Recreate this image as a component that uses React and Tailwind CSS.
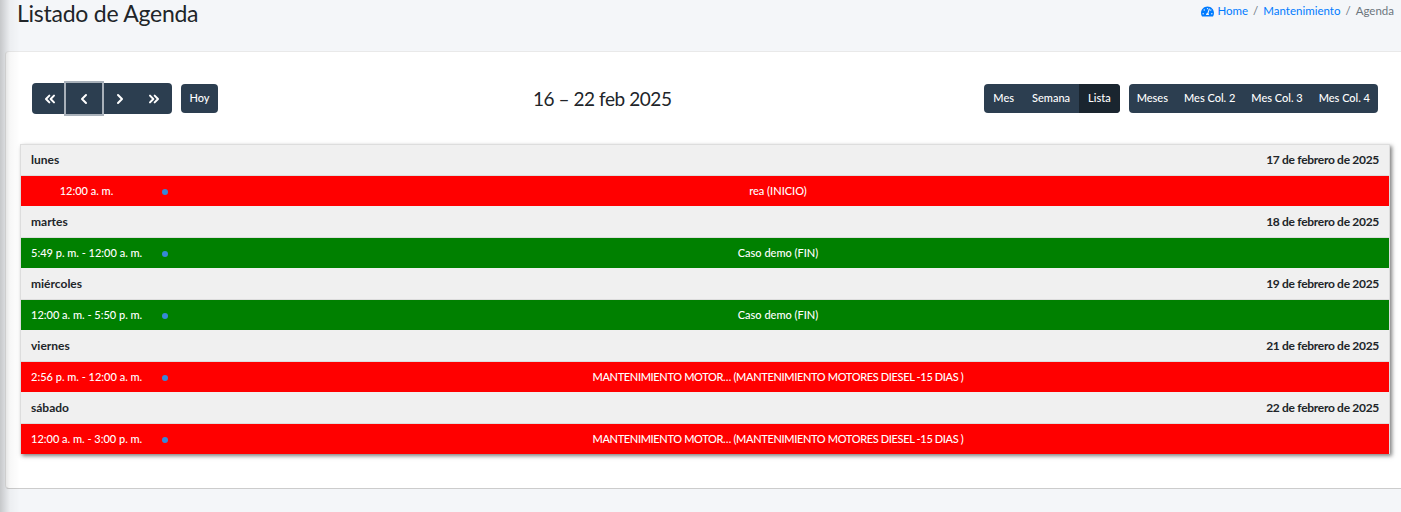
import { FaTachometerAlt } from 'react-icons/fa';
import { ChevronLeft, ChevronRight, ChevronsLeft, ChevronsRight } from 'lucide-react';

const days = [
  { day: 'lunes', date: '17 de febrero de 2025', time: '12:00 a. m.', title: 'rea (INICIO)', color: 'bg-[#ff0000]', center: true },
  { day: 'martes', date: '18 de febrero de 2025', time: '5:49 p. m. - 12:00 a. m.', title: 'Caso demo (FIN)', color: 'bg-[#008000]' },
  { day: 'miércoles', date: '19 de febrero de 2025', time: '12:00 a. m. - 5:50 p. m.', title: 'Caso demo (FIN)', color: 'bg-[#008000]' },
  { day: 'viernes', date: '21 de febrero de 2025', time: '2:56 p. m. - 12:00 a. m.', title: 'MANTENIMIENTO MOTOR… (MANTENIMIENTO MOTORES DIESEL -15 DIAS )', color: 'bg-[#ff0000]', caps: true },
  { day: 'sábado', date: '22 de febrero de 2025', time: '12:00 a. m. - 3:00 p. m.', title: 'MANTENIMIENTO MOTOR… (MANTENIMIENTO MOTORES DIESEL -15 DIAS )', color: 'bg-[#ff0000]', caps: true },
];

const btn = 'h-[29px] flex items-center text-white text-[11px] font-medium';

export default function App() {
  return (
    <div className="relative h-[512px] overflow-hidden bg-[#f4f6f9] font-['Lato',sans-serif] text-[#212529]">
      <div className="absolute left-0 top-0 bottom-0 w-[20px] bg-gradient-to-r from-[#00000030] via-[#00000008] to-transparent z-10" />

      <div className="h-[51px] flex justify-between pl-[17px] pr-[7px]">
        <h1 className="text-[23px] leading-[26px] tracking-[-0.25px] font-normal">Listado de Agenda</h1>
        <div className="flex items-center gap-[5px] h-[22px] text-[11.5px]">
          <span className="flex items-center gap-[3px] text-[#007bff]"><FaTachometerAlt className="text-[13px]" />Home</span>
          <span className="text-[#6c757d]">/</span>
          <span className="text-[#007bff]">Mantenimiento</span>
          <span className="text-[#6c757d]">/</span>
          <span className="text-[#6c757d]">Agenda</span>
        </div>
      </div>

      <div className="ml-[5px] -mr-[10px] h-[438px] bg-white rounded-[4px] border-t border-t-[#e9e9e9] border-b border-b-[#cccccc] border-l border-l-[#e5e5e5] pl-[14px] pr-[33px]">
        <div className="h-[92px] pt-[31px] flex justify-between">
          <div className="flex items-start gap-[9px] pl-[12px]">
            <div className="flex items-center h-[31px] bg-[#2c3e50] rounded-[4px] text-white">
              <span className="w-[32px] pl-[3px] flex justify-center"><ChevronsLeft size={16} strokeWidth={3} /></span>
              <span className="w-[40px] h-[35px] flex justify-center items-center bg-[#2c3e50] border-[2px] border-[#a9b1ba]"><ChevronLeft size={16} strokeWidth={3} /></span>
              <span className="w-[31px] flex justify-center"><ChevronRight size={16} strokeWidth={3} /></span>
              <span className="w-[37px] flex justify-center"><ChevronsRight size={16} strokeWidth={3} /></span>
            </div>
            <div className={`${btn} w-[37px] justify-center bg-[#2c3e50] rounded-[4px] mt-px`}>Hoy</div>
          </div>
          <h2 className="text-[19px] leading-[30px] tracking-[-0.45px] font-normal absolute left-[533px] top-[84px]">16 – 22 feb 2025</h2>
          <div className="flex items-start gap-[9px] mt-px">
            <div className="flex bg-[#2c3e50] rounded-[4px] overflow-hidden">
              <div className={`${btn} px-[9px]`}>Mes</div>
              <div className={`${btn} px-[9px]`}>Semana</div>
              <div className={`${btn} px-[9px] bg-[#1a252f]`}>Lista</div>
            </div>
            <div className="flex bg-[#2c3e50] rounded-[4px] overflow-hidden">
              <div className={`${btn} px-[8px]`}>Meses</div>
              <div className={`${btn} px-[8px]`}>Mes Col. 2</div>
              <div className={`${btn} px-[8px]`}>Mes Col. 3</div>
              <div className={`${btn} px-[8px]`}>Mes Col. 4</div>
            </div>
          </div>
        </div>

        <div className="w-[1370px] border-x border-[#dddddd] shadow-[2px_2px_4px_rgba(0,0,0,0.5)]">
          {days.map((d, i) => (
            <div key={d.day}>
              <div className={`h-[32px] flex justify-between items-center px-[10px] bg-[#f0f0f0] border-b border-[#dddddd] text-[12px] font-bold ${i === 0 ? 'border-t' : ''}`}>
                <span>{d.day}</span>
                <span className="tracking-[-0.3px]">{d.date}</span>
              </div>
              <div className={`${d.color} h-[30px] flex items-center text-white text-[11px] font-medium`}>
                <div className={`w-[131px] whitespace-nowrap ${d.center ? 'text-center' : 'pl-[10px]'}`}>{d.time}</div>
                <div className="w-[25px] flex justify-center">
                  <span className="w-[6px] h-[6px] mt-px rounded-full bg-[#3788d8] block" />
                </div>
                <div className={`flex-1 text-center pr-[10px] ${d.caps ? 'tracking-[-0.35px]' : ''}`}>{d.title}</div>
              </div>
            </div>
          ))}
        </div>
      </div>
    </div>
  );
}
